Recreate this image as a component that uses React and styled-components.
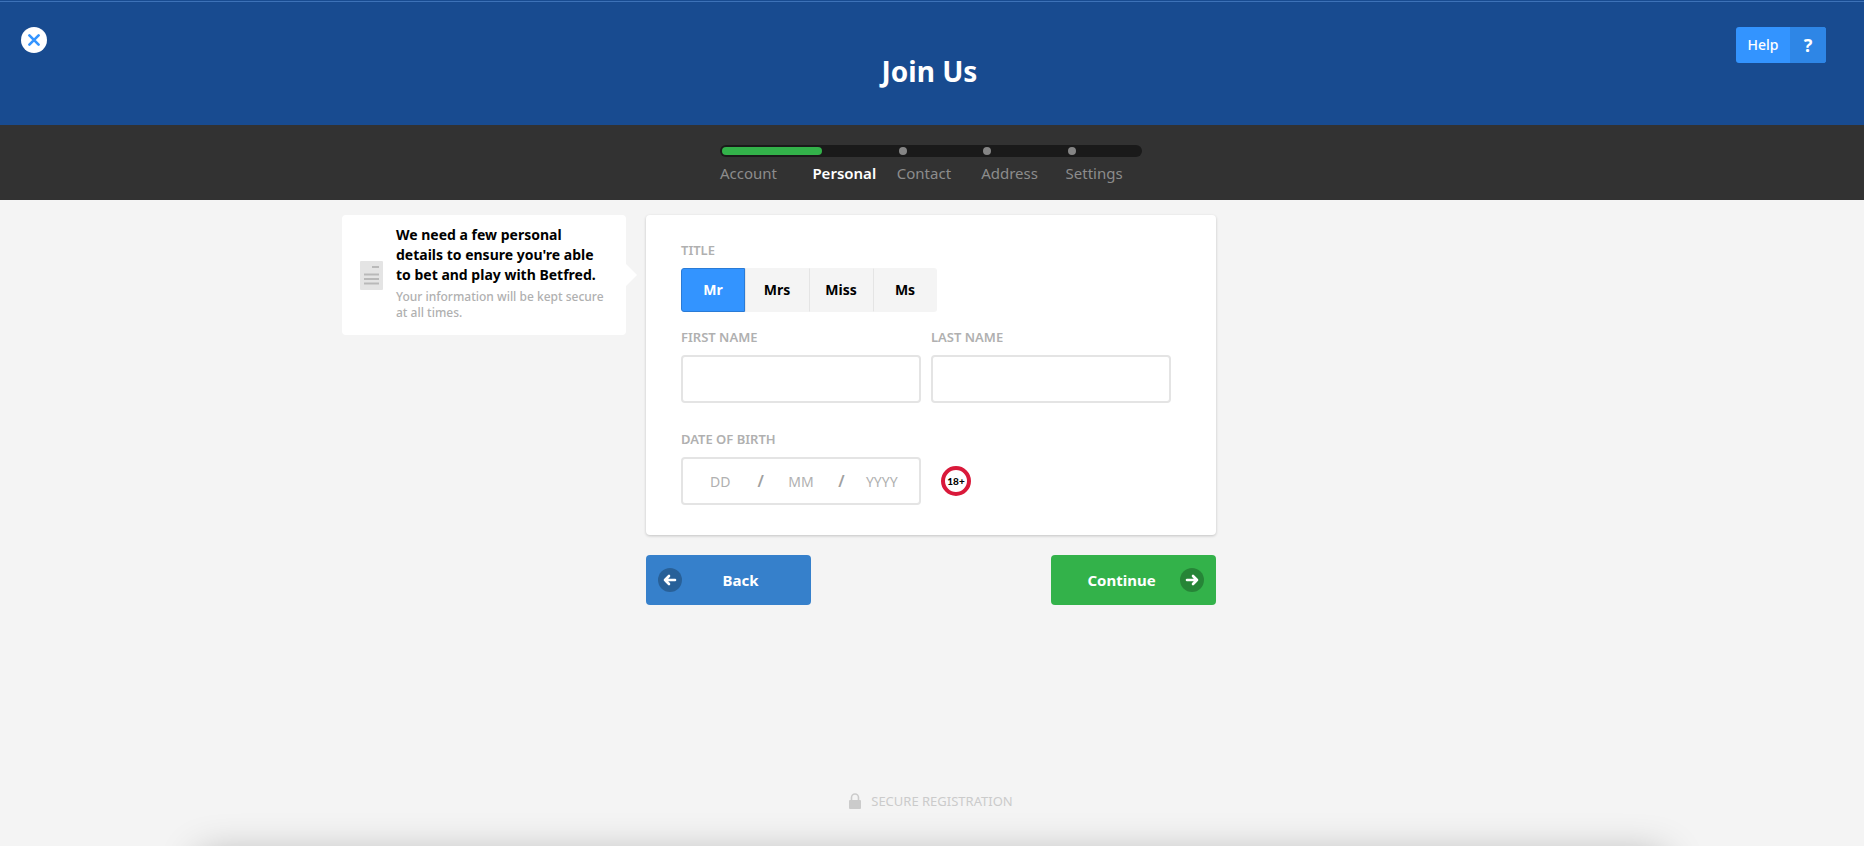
import React, { useState } from "react";
import styled, { createGlobalStyle } from "styled-components";

const steps = ["Account", "Personal", "Contact", "Address", "Settings"];
const titles = ["Mr", "Mrs", "Miss", "Ms"];
const currentStep = 1;

const ArrowIcon = ({ flip }) => (
  <svg width="24" height="24" viewBox="0 0 24 24" aria-hidden="true">
    <circle cx="12" cy="12" r="12" fill="#000" fillOpacity="0.25" />
    <path
      d="M7 12h10M13 8l4 4-4 4"
      transform={flip ? "rotate(180 12 12)" : undefined}
      fill="none"
      stroke="#fff"
      strokeWidth="2.6"
      strokeLinecap="round"
      strokeLinejoin="round"
    />
  </svg>
);

const App = () => {
  const [title, setTitle] = useState("Mr");
  const [form, setForm] = useState({
    firstName: "",
    lastName: "",
    day: "",
    month: "",
    year: "",
  });

  const handleChange = (e) => {
    setForm({ ...form, [e.target.name]: e.target.value });
  };

  return (
    <Page>
      <GlobalStyle />
      <Header>
        <CloseButton type="button" aria-label="Close">
          <svg width="12" height="12" viewBox="0 0 12 12" aria-hidden="true">
            <path
              d="M1.4 1.4l9.2 9.2M10.6 1.4l-9.2 9.2"
              stroke="#3394ff"
              strokeWidth="2.6"
              strokeLinecap="round"
            />
          </svg>
        </CloseButton>
        <Heading>Join Us</Heading>
        <HelpButton type="button">
          <HelpText>Help</HelpText>
          <HelpMark>?</HelpMark>
        </HelpButton>
      </Header>

      <ProgressBar>
        <Track>
          <Fill />
          {steps.map((step, i) => (
            <TrackCell key={step}>{i > currentStep && <Dot />}</TrackCell>
          ))}
        </Track>
        <StepList>
          {steps.map((step, i) => (
            <Step key={step} $active={i === currentStep}>
              {step}
            </Step>
          ))}
        </StepList>
      </ProgressBar>

      <Content>
        <Tip>
          <svg width="23" height="29" viewBox="0 0 23 29" aria-hidden="true">
            <rect width="23" height="29" rx="1" fill="#e4e4e4" />
            <path
              d="M12 6h7M4 13.5h15M4 18h15M4 22.5h15"
              stroke="#b9b9b9"
              strokeWidth="2"
            />
          </svg>
          <div>
            <TipTitle>
              We need a few personal details to ensure you're able to bet and
              play with Betfred.
            </TipTitle>
            <TipText>Your information will be kept secure at all times.</TipText>
          </div>
        </Tip>

        <form onSubmit={(e) => e.preventDefault()}>
          <Card>
            <Group>
              <Legend>TITLE</Legend>
              <TitleRow>
                {titles.map((t) => (
                  <TitleOption key={t} $active={t === title}>
                    <HiddenRadio
                      name="title"
                      value={t}
                      checked={t === title}
                      onChange={() => setTitle(t)}
                    />
                    {t}
                  </TitleOption>
                ))}
              </TitleRow>
            </Group>

            <NameRow>
              <div>
                <Label htmlFor="firstName">FIRST NAME</Label>
                <Input
                  id="firstName"
                  name="firstName"
                  type="text"
                  value={form.firstName}
                  onChange={handleChange}
                />
              </div>
              <div>
                <Label htmlFor="lastName">LAST NAME</Label>
                <Input
                  id="lastName"
                  name="lastName"
                  type="text"
                  value={form.lastName}
                  onChange={handleChange}
                />
              </div>
            </NameRow>

            <Group>
              <Legend>DATE OF BIRTH</Legend>
              <DateRow>
                <DateBox>
                  <DateInput
                    name="day"
                    placeholder="DD"
                    aria-label="Day"
                    value={form.day}
                    onChange={handleChange}
                  />
                  <Slash>/</Slash>
                  <DateInput
                    name="month"
                    placeholder="MM"
                    aria-label="Month"
                    value={form.month}
                    onChange={handleChange}
                  />
                  <Slash>/</Slash>
                  <DateInput
                    name="year"
                    placeholder="YYYY"
                    aria-label="Year"
                    value={form.year}
                    onChange={handleChange}
                  />
                </DateBox>
                <AgeBadge>18+</AgeBadge>
              </DateRow>
            </Group>
          </Card>

          <Actions>
            <NavButton type="button" $color="#3680cb">
              <ArrowIcon flip />
              <span>Back</span>
            </NavButton>
            <NavButton type="submit" $color="#33b24a">
              <span>Continue</span>
              <ArrowIcon />
            </NavButton>
          </Actions>
        </form>
      </Content>

      <Footer>
        <svg width="12" height="16" viewBox="0 0 12 16" aria-hidden="true">
          <path
            d="M2.5 8V4.5a3.5 3.5 0 0 1 7 0V8"
            fill="none"
            stroke="#cbcbcb"
            strokeWidth="1.6"
          />
          <rect y="7" width="12" height="9" rx="1" fill="#cbcbcb" />
        </svg>
        SECURE REGISTRATION
      </Footer>
      <BottomShadow />
    </Page>
  );
};

const GlobalStyle = createGlobalStyle`
  * {
    box-sizing: border-box;
  }
  body {
    margin: 0;
    background-color: #f4f4f4;
    font-family: "Noto Sans", sans-serif;
  }
  button,
  input {
    font-family: inherit;
  }
`;

const Page = styled.div`
  position: relative;
  display: flex;
  flex-direction: column;
  min-height: 100vh;
  overflow: hidden;
`;

const Header = styled.header`
  display: grid;
  grid-template-columns: 1fr auto 1fr;
  height: 125px;
  padding: 27px 26px 0 21px;
  background: linear-gradient(#184b90 1px, #3d72b8 1px, #3d72b8 2px, #184b90 2px);
`;

const CloseButton = styled.button`
  display: flex;
  align-items: center;
  justify-content: center;
  width: 26px;
  height: 26px;
  padding: 0;
  border: none;
  border-radius: 50%;
  background-color: #fff;
  cursor: pointer;
`;

const Heading = styled.h1`
  margin: 24px 0 0;
  color: #fff;
  font-size: 28px;
  line-height: 40px;
`;

const HelpButton = styled.button`
  display: flex;
  justify-self: end;
  height: 36px;
  margin-right: 12px;
  padding: 0;
  border: none;
  border-radius: 3px;
  overflow: hidden;
  background-color: #3394ff;
  color: #fff;
  line-height: 36px;
  cursor: pointer;
`;

const HelpText = styled.span`
  width: 54px;
  font-size: 14px;
  font-weight: 500;
`;

const HelpMark = styled.span`
  width: 36px;
  height: 36px;
  background-color: #2e86e6;
  font-size: 18px;
  font-weight: 700;
`;

const ProgressBar = styled.div`
  display: flex;
  flex-direction: column;
  align-items: center;
  height: 75px;
  padding: 20px 2px 0 0;
  background-color: #323232;
`;

const Track = styled.div`
  position: relative;
  display: grid;
  grid-template-columns: repeat(5, 1fr);
  align-items: center;
  width: 422px;
  height: 12px;
  border-radius: 6px;
  background-color: #1a1a1a;
`;

/* lies over the dark track */
const Fill = styled.div`
  position: absolute;
  top: 2px;
  left: 2px;
  width: 100px;
  height: 8px;
  border-radius: 4px;
  background-color: #33b24a;
`;

const TrackCell = styled.div`
  padding-left: 10px;
`;

const Dot = styled.div`
  width: 8px;
  height: 8px;
  border-radius: 50%;
  background-color: #858585;
`;

const StepList = styled.ol`
  display: grid;
  grid-template-columns: repeat(5, 1fr);
  width: 422px;
  margin: 4px 0 0;
  padding: 0;
  list-style: none;
`;

const Step = styled.li`
  padding-left: 8px;
  color: ${({ $active }) => ($active ? "#fff" : "#8c8c8c")};
  font-size: 15px;
  font-weight: ${({ $active }) => ($active ? 600 : 400)};
  line-height: 24px;
  &:first-child {
    padding-left: 0;
  }
`;

const Content = styled.main`
  display: grid;
  grid-template-columns: 284px 570px 284px;
  grid-gap: 20px;
  justify-content: center;
  align-items: start;
  padding: 15px 2px 0 0;
`;

const Tip = styled.aside`
  position: relative;
  display: flex;
  align-items: center;
  gap: 13px;
  height: 120px;
  padding: 0 16px 0 18px;
  border-radius: 4px;
  background-color: #fff;
  svg {
    flex: none;
  }
  &::after {
    content: "";
    position: absolute;
    top: 49px;
    left: 100%;
    border: 11px solid transparent;
    border-right: none;
    border-left-color: #fff;
  }
`;

const TipTitle = styled.p`
  margin: 0;
  color: #000;
  font-size: 14px;
  font-weight: 700;
  line-height: 20px;
`;

const TipText = styled.p`
  margin: 4px 0;
  color: #b0b0b0;
  font-size: 12px;
  font-weight: 500;
  line-height: 16px;
`;

const Card = styled.div`
  padding: 25px 35px 30px;
  border-radius: 4px;
  background-color: #fff;
  box-shadow: 0 1px 3px rgba(0, 0, 0, 0.2);
`;

const Group = styled.fieldset`
  min-width: 0;
  margin: 0;
  padding: 0;
  border: none;
`;

const Label = styled.label`
  display: block;
  padding: 0 0 8px;
  color: #b0b0b0;
  font-size: 13px;
  font-weight: 600;
  line-height: 20px;
`;

const Legend = styled(Label).attrs({ as: "legend" })``;

const TitleRow = styled.div`
  display: flex;
`;

const TitleOption = styled.label`
  width: 64px;
  height: 44px;
  border: 1px solid ${({ $active }) => ($active ? "#2a7bd6" : "#f4f4f4")};
  border-left-color: ${({ $active }) => ($active ? "#2a7bd6" : "#e4e4e4")};
  background-color: ${({ $active }) => ($active ? "#3394ff" : "#f4f4f4")};
  color: ${({ $active }) => ($active ? "#fff" : "#000")};
  font-size: 14px;
  font-weight: 700;
  line-height: 42px;
  text-align: center;
  cursor: pointer;
  &:first-child {
    border-radius: 3px 0 0 3px;
  }
  &:last-child {
    border-radius: 0 3px 3px 0;
  }
`;

const HiddenRadio = styled.input.attrs({ type: "radio" })`
  position: absolute;
  opacity: 0;
`;

const NameRow = styled.div`
  display: grid;
  grid-template-columns: 240px 240px;
  grid-gap: 10px;
  padding: 15px 0 26px;
`;

const Input = styled.input`
  display: block;
  width: 100%;
  height: 48px;
  padding: 0 12px;
  border: 2px solid #e4e4e4;
  border-radius: 4px;
  font-size: 15px;
  &:focus {
    outline: none;
  }
`;

const DateRow = styled.div`
  display: flex;
  align-items: center;
  gap: 20px;
`;

const DateBox = styled.div`
  display: flex;
  align-items: center;
  width: 240px;
  height: 48px;
  border: 2px solid #e4e4e4;
  border-radius: 4px;
`;

const DateInput = styled.input`
  flex: 1;
  min-width: 0;
  height: 40px;
  padding: 0;
  border: none;
  background: none;
  font-size: 14px;
  text-align: center;
  &::placeholder {
    color: #b0b0b0;
  }
  &:focus {
    outline: none;
  }
`;

const Slash = styled.span`
  color: #a0a0a0;
  font-size: 16px;
  font-weight: 600;
`;

const AgeBadge = styled.span`
  width: 30px;
  height: 30px;
  border: 4px solid #d9193a;
  border-radius: 50%;
  color: #000;
  font-family: Lato, sans-serif;
  font-size: 10px;
  font-weight: 900;
  line-height: 22px;
  text-align: center;
`;

const Actions = styled.div`
  display: flex;
  justify-content: space-between;
  margin-top: 20px;
`;

const NavButton = styled.button`
  display: flex;
  align-items: center;
  width: 165px;
  height: 50px;
  padding: 0 12px;
  border: none;
  border-radius: 4px;
  background-color: ${({ $color }) => $color};
  color: #fff;
  font-size: 15px;
  font-weight: 700;
  cursor: pointer;
  span {
    flex: 1;
  }
`;

const Footer = styled.footer`
  display: flex;
  align-items: center;
  justify-content: center;
  gap: 10px;
  margin-top: auto;
  padding: 0 2px 34px 0;
  color: #cbcbcb;
  font-size: 13px;
  line-height: 22px;
`;

/* soft edge of the window underneath the page */
const BottomShadow = styled.div`
  position: absolute;
  right: 200px;
  bottom: -70px;
  left: 200px;
  height: 60px;
  box-shadow: 0 0 40px rgba(0, 0, 0, 0.3);
  pointer-events: none;
`;

export default App;
